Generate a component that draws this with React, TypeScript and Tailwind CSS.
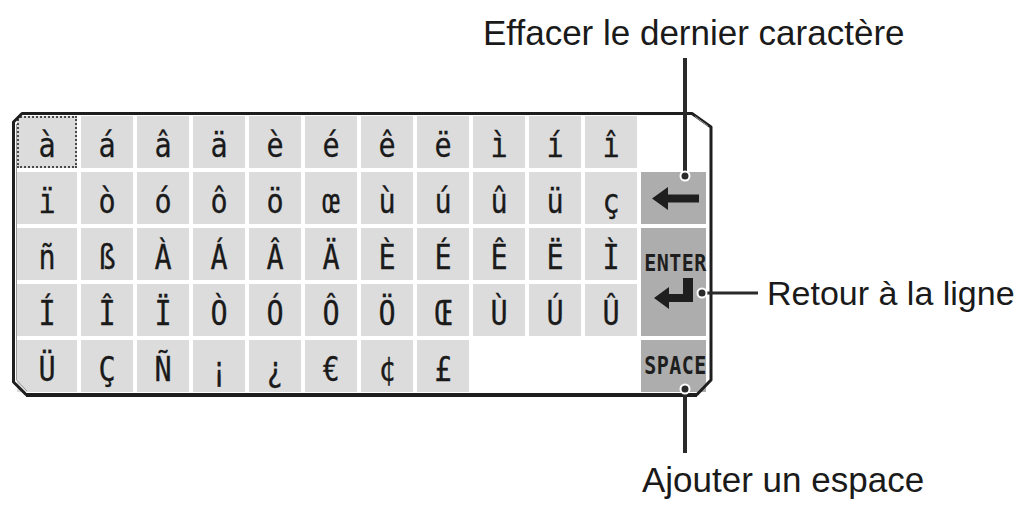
import React from "react";

const rows: string[][] = [
  ["à", "á", "â", "ä", "è", "é", "ê", "ë", "ì", "í", "î"],
  ["ï", "ò", "ó", "ô", "ö", "œ", "ù", "ú", "û", "ü", "ç"],
  ["ñ", "ß", "À", "Á", "Â", "Ä", "È", "É", "Ê", "Ë", "Ì"],
  ["Í", "Î", "Ï", "Ò", "Ó", "Ô", "Ö", "Œ", "Ù", "Ú", "Û"],
  ["Ü", "Ç", "Ñ", "¡", "¿", "€", "¢", "£", "", "", ""],
];

function CharCell({ ch, focus }: { ch: string; focus?: boolean }) {
  if (!ch) return <div className="bg-white" />;
  return (
    <div
      className={
        "flex items-center justify-center bg-[#dcdcdc] pt-[7px] text-[30px] leading-none text-[#1a1a1a] font-['DejaVu_Sans_Mono',monospace] " +
        (focus ? "border-2 border-dotted border-[#4a4a4a]" : "")
      }
    >
      <span className="inline-block scale-y-[1.12] scale-x-[0.95] [-webkit-text-stroke:0.25px_#1a1a1a]">{ch}</span>
    </div>
  );
}

function Keyboard() {
  const cells: React.ReactNode[] = [];
  rows.forEach((row, r) => {
    row.forEach((ch, c) => {
      cells.push(<CharCell key={`${r}-${c}`} ch={ch} focus={r === 0 && c === 0} />);
    });
    if (r === 0) cells.push(<div key="sp0" className="bg-white" />);
    if (r === 1)
      cells.push(
        <div key="bk" className="flex items-center justify-center bg-[#adadad] pl-[3px]">
          <svg width="47" height="23" viewBox="0 0 47 23">
            <path d="M0 11.5 L16 0 L16 7.5 L47 7.5 L47 15.5 L16 15.5 L16 23 Z" fill="#1e1e1e" />
          </svg>
        </div>
      );
    if (r === 2)
      cells.push(
        <div key="en" className="row-span-2 flex flex-col items-center bg-[#adadad] pt-[25px]">
          <span className="inline-block pl-[4px] text-[20px] font-bold leading-none text-[#1e1e1e] font-['DejaVu_Sans_Mono',monospace] tracking-[0.5px] scale-y-[1.15]">
            ENTER
          </span>
          <svg className="mt-[5px]" width="40" height="33" viewBox="0 0 40 33">
            <path d="M0 20 L15 9 L15 16 L29 16 L29 0 L39 0 L39 24 L15 24 L15 31 Z" fill="#1e1e1e" />
          </svg>
        </div>
      );
    if (r === 4)
      cells.push(
        <div key="spc" className="flex items-center justify-center bg-[#adadad] pl-[4px]">
          <span className="inline-block text-[20px] font-bold leading-none text-[#1e1e1e] font-['DejaVu_Sans_Mono',monospace] tracking-[0.5px] scale-y-[1.2]">
            SPACE
          </span>
        </div>
      );
  });

  return (
    <div className="relative ml-[12px] h-[285px] w-[702px] shrink-0 bg-white pl-[5px] pt-[4px]">
      <div className="grid grid-cols-[60px_repeat(10,52px)_65px] grid-rows-[repeat(5,52px)] gap-[4px]">
        {cells}
      </div>
      <svg className="pointer-events-none absolute inset-0" width="702" height="285" viewBox="0 0 702 285">
        <path
          d="M1.5 10 L10 1.5 L680 1.5 L699 15 L699 268 L685 282.5 L14 282.5 L1.5 270 Z"
          fill="none"
          stroke="#1e1e1e"
          strokeWidth="3"
          strokeLinejoin="round"
        />
        <path d="M14 283 L685 283" stroke="#1e1e1e" strokeWidth="4" />
        <path d="M4.5 12 L4.5 268 L15 279" fill="none" stroke="#9a9a9a" strokeWidth="1" />
        <path d="M683 4.5 L696 14" fill="none" stroke="#9a9a9a" strokeWidth="1" />
      </svg>
    </div>
  );
}

export default function App() {
  return (
    <div className="relative h-[511px] w-[1018px] overflow-hidden bg-white font-['Liberation_Sans',Arial,sans-serif] text-[#1a1a1a]">
      <div className="pl-[483px] pt-[15px] text-[35px] leading-none whitespace-nowrap">
        Effacer le dernier caractère
      </div>
      <div className="mt-[62px] flex items-start">
        <Keyboard />
        <div className="ml-[53px] mt-[164px] text-[34px] leading-none whitespace-nowrap">
          Retour à la ligne
        </div>
      </div>
      <div className="mt-[65px] pl-[642px] text-[35px] leading-none whitespace-nowrap">
        Ajouter un espace
      </div>

      <svg className="pointer-events-none absolute left-0 top-0" width="1018" height="511" viewBox="0 0 1018 511">
        <line x1="685" y1="58" x2="685" y2="175" stroke="#2a2a2a" strokeWidth="4" />
        <circle cx="685" cy="176" r="4.5" fill="#2a2a2a" stroke="#ffffff" strokeWidth="2" />
        <line x1="703" y1="293" x2="758" y2="293" stroke="#2a2a2a" strokeWidth="3" />
        <circle cx="702" cy="293" r="4.5" fill="#2a2a2a" stroke="#ffffff" strokeWidth="2" />
        <line x1="685" y1="390" x2="685" y2="453" stroke="#2a2a2a" strokeWidth="4" />
        <circle cx="685" cy="389" r="4.5" fill="#2a2a2a" stroke="#ffffff" strokeWidth="2" />
      </svg>
    </div>
  );
}
